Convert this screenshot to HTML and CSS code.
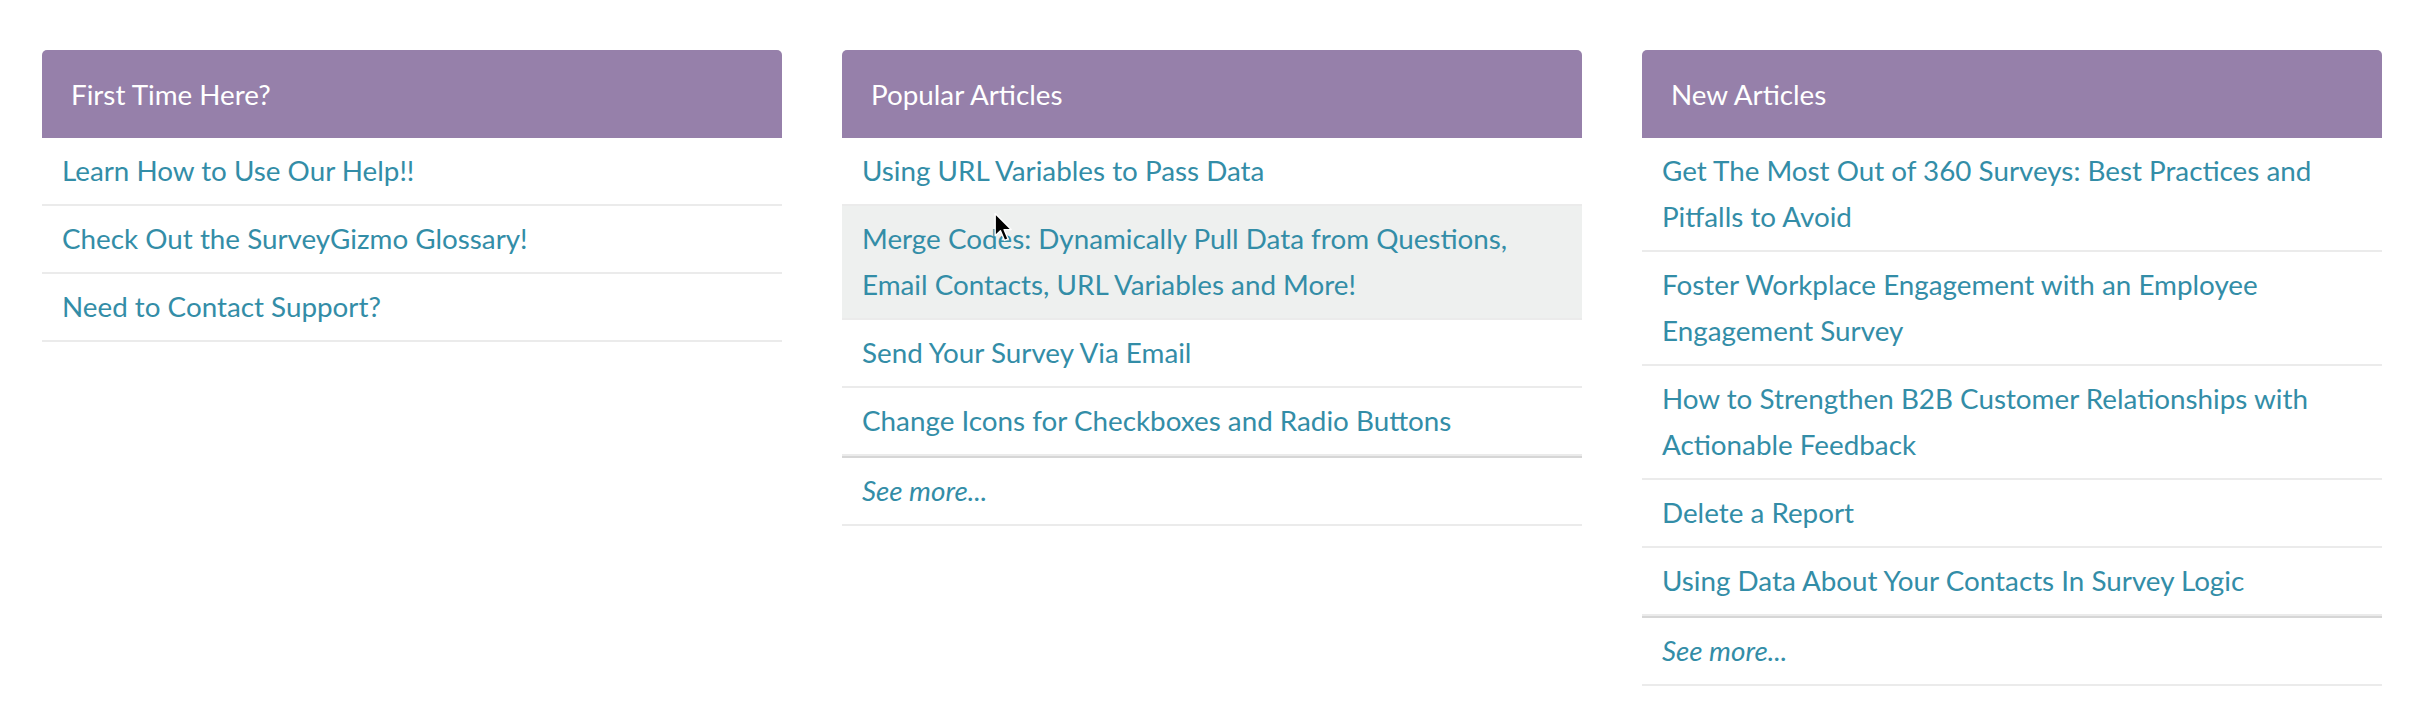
FILE: index.html
```html
<!DOCTYPE html>
<html lang="en">
<head>
<meta charset="utf-8">
<title>Help Center</title>
<link rel="stylesheet" href="styles.css">
</head>
<body>
<div class="columns">
  <section class="panel">
    <h2 class="panel-title">First Time Here?</h2>
    <ul class="list">
      <li class="item"><a href="#">Learn How to Use Our Help!!</a></li>
      <li class="item"><a href="#">Check Out the SurveyGizmo Glossary!</a></li>
      <li class="item"><a href="#">Need to Contact Support?</a></li>
    </ul>
  </section>
  <section class="panel">
    <h2 class="panel-title">Popular Articles</h2>
    <ul class="list">
      <li class="item"><a href="#">Using URL Variables to Pass Data</a></li>
      <li class="item hover"><a href="#">Merge Codes: Dynamically Pull Data from Questions, Email Contacts, URL Variables and More!</a>
        <svg class="cursor" viewBox="0 0 17 26" width="20" height="31"><path d="M1 1 L1 20 L5.5 15.8 L9 24 L12 22.7 L8.6 14.8 L14.6 14.8 Z" fill="#000" stroke="#fff" stroke-width="1.2" stroke-linejoin="round"/></svg>
      </li>
      <li class="item"><a href="#">Send Your Survey Via Email</a></li>
      <li class="item"><a href="#">Change Icons for Checkboxes and Radio Buttons</a></li>
      <li class="item more"><a href="#">See more...</a></li>
    </ul>
  </section>
  <section class="panel">
    <h2 class="panel-title">New Articles</h2>
    <ul class="list">
      <li class="item"><a href="#">Get The Most Out of 360 Surveys: Best Practices and Pitfalls to Avoid</a></li>
      <li class="item"><a href="#">Foster Workplace Engagement with an Employee Engagement Survey</a></li>
      <li class="item"><a href="#">How to Strengthen B2B Customer Relationships with Actionable Feedback</a></li>
      <li class="item"><a href="#">Delete a Report</a></li>
      <li class="item"><a href="#">Using Data About Your Contacts In Survey Logic</a></li>
      <li class="item more"><a href="#">See more...</a></li>
    </ul>
  </section>
</div>
</body>
</html>
```
FILE: styles.css
```css
html, body {
  margin: 0;
  padding: 0;
  background: #ffffff;
}
body {
  font-family: Lato, "Open Sans", "Liberation Sans", sans-serif;
  font-size: 27.8px;
}
.columns {
  display: grid;
  grid-template-columns: 740px 740px 740px;
  column-gap: 60px;
  padding: 50px 40px 0 42px;
  align-items: start;
}
.panel {
  display: flex;
  flex-direction: column;
}
.panel-title {
  margin: 0;
  height: 88px;
  display: flex;
  align-items: center;
  padding: 0 29px;
  background: #9680aa;
  color: #ffffff;
  font-size: 27.8px;
  font-weight: 400;
  border-radius: 5px 5px 0 0;
}
.list {
  list-style: none;
  margin: 0;
  padding: 0;
}
.item {
  position: relative;
  padding: 10px 20px;
  line-height: 46px;
  border-bottom: 2px solid #ebebeb;
}
.item a {
  color: #338da7;
  text-decoration: none;
}
.item.hover {
  background: #eef0ef;
}
.item.more {
  border-top: 2px solid #d6d6d6;
}
.item.more a {
  font-style: italic;
}
.cursor {
  position: absolute;
  left: 152px;
  top: 6px;
}
```
